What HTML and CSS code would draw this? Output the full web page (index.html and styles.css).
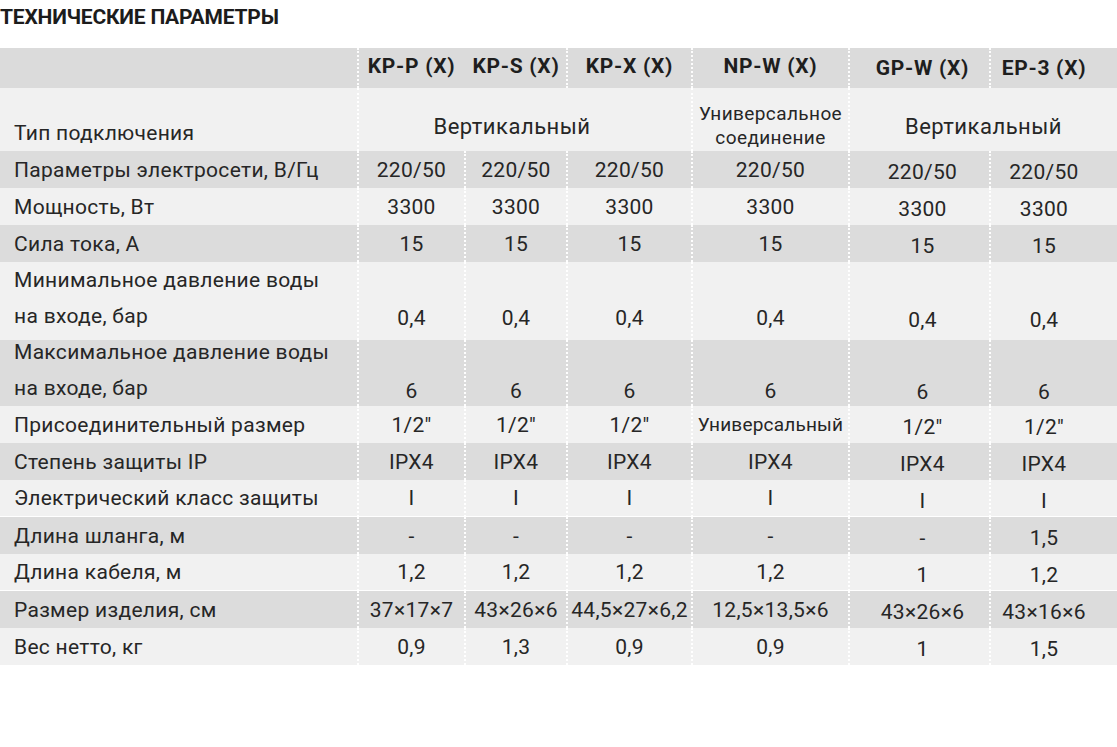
FILE: index.html
```html
<!DOCTYPE html>
<html lang="ru">
<head>
<meta charset="utf-8">
<title>Технические параметры</title>
<link rel="stylesheet" href="styles.css">
</head>
<body>
<h1 class="title">ТЕХНИЧЕСКИЕ ПАРАМЕТРЫ</h1>
<table class="spec">
  <colgroup>
    <col class="c0"><col class="c1"><col class="c2"><col class="c3"><col class="c4"><col class="c5"><col class="c6">
  </colgroup>
  <thead>
    <tr class="head">
      <th class="lbl"></th>
      <th class="v">KP-P (X)</th>
      <th class="v nodiv">KP-S (X)</th>
      <th class="v">KP-X (X)</th>
      <th class="v">NP-W (X)</th>
      <th class="v s gp">GP-W (X)</th>
      <th class="v s ep">EP-3 (X)</th>
    </tr>
  </thead>
  <tbody>
    <tr class="r-type light">
      <td class="lbl">Тип подключения</td>
      <td class="v big span3" colspan="3">Вертикальный</td>
      <td class="v small">Универсальное<br>соединение</td>
      <td class="v big" colspan="2">Вертикальный</td>
    </tr>
    <tr class="r dark">
      <td class="lbl">Параметры электросети, В/Гц</td>
      <td class="v">220/50</td><td class="v">220/50</td><td class="v">220/50</td><td class="v">220/50</td><td class="v s gp">220/50</td><td class="v s ep">220/50</td>
    </tr>
    <tr class="r light">
      <td class="lbl">Мощность, Вт</td>
      <td class="v">3300</td><td class="v">3300</td><td class="v">3300</td><td class="v">3300</td><td class="v s gp">3300</td><td class="v s ep">3300</td>
    </tr>
    <tr class="r dark">
      <td class="lbl">Сила тока, А</td>
      <td class="v">15</td><td class="v">15</td><td class="v">15</td><td class="v">15</td><td class="v s gp">15</td><td class="v s ep">15</td>
    </tr>
    <tr class="r-min light">
      <td class="lbl"><div class="two">Минимальное давление воды<br>на входе, бар</div></td>
      <td class="v">0,4</td><td class="v">0,4</td><td class="v">0,4</td><td class="v">0,4</td><td class="v s gp">0,4</td><td class="v s ep">0,4</td>
    </tr>
    <tr class="r-max dark">
      <td class="lbl"><div class="two up">Максимальное давление воды<br>на входе, бар</div></td>
      <td class="v">6</td><td class="v">6</td><td class="v">6</td><td class="v">6</td><td class="v s gp">6</td><td class="v s ep">6</td>
    </tr>
    <tr class="r light">
      <td class="lbl">Присоединительный размер</td>
      <td class="v">1/2"</td><td class="v">1/2"</td><td class="v">1/2"</td><td class="v small1">Универсальный</td><td class="v s gp">1/2"</td><td class="v s ep">1/2"</td>
    </tr>
    <tr class="r dark">
      <td class="lbl">Степень защиты IP</td>
      <td class="v">IPX4</td><td class="v">IPX4</td><td class="v">IPX4</td><td class="v">IPX4</td><td class="v s gp">IPX4</td><td class="v s ep">IPX4</td>
    </tr>
    <tr class="r light line">
      <td class="lbl">Электрический класс защиты</td>
      <td class="v">I</td><td class="v">I</td><td class="v">I</td><td class="v">I</td><td class="v s gp">I</td><td class="v s ep">I</td>
    </tr>
    <tr class="r dark">
      <td class="lbl">Длина шланга, м</td>
      <td class="v">-</td><td class="v">-</td><td class="v">-</td><td class="v">-</td><td class="v s gp">-</td><td class="v s ep">1,5</td>
    </tr>
    <tr class="r light line">
      <td class="lbl">Длина кабеля, м</td>
      <td class="v">1,2</td><td class="v">1,2</td><td class="v">1,2</td><td class="v">1,2</td><td class="v s gp">1</td><td class="v s ep">1,2</td>
    </tr>
    <tr class="r dark">
      <td class="lbl">Размер изделия, см</td>
      <td class="v">37×17×7</td><td class="v">43×26×6</td><td class="v">44,5×27×6,2</td><td class="v">12,5×13,5×6</td><td class="v s gp">43×26×6</td><td class="v s ep">43×16×6</td>
    </tr>
    <tr class="r light">
      <td class="lbl">Вес нетто, кг</td>
      <td class="v">0,9</td><td class="v">1,3</td><td class="v">0,9</td><td class="v">0,9</td><td class="v s gp">1</td><td class="v s ep">1,5</td>
    </tr>
  </tbody>
</table>
</body>
</html>
```
FILE: styles.css
```css
html, body {
  margin: 0;
  padding: 0;
  background: #ffffff;
}

body {
  font-family: Roboto, "Liberation Sans", sans-serif;
  color: #222222;
  width: 1117px;
  overflow: hidden;
}

.title {
  margin: 5px 0 19px 0;
  font-size: 21px;
  line-height: 24px;
  font-weight: 700;
  letter-spacing: -0.2px;
  color: #1c1c1c;
}

.spec {
  border-collapse: separate;
  border-spacing: 0;
  table-layout: fixed;
  width: 1117px;
  font-size: 21px;
  letter-spacing: 0.3px;
}

.c0 { width: 357px; }
.c1 { width: 107px; }
.c2 { width: 102px; }
.c3 { width: 125px; }
.c4 { width: 157px; }
.c5 { width: 141px; }
.c6 { width: 128px; }

.spec th,
.spec td {
  padding: 0;
  white-space: nowrap;
  vertical-align: middle;
  font-weight: 400;
  color: #262626;
}

.spec .lbl {
  text-align: left;
  padding-left: 14px;
}

.spec .v {
  text-align: center;
  border-left: 2px dotted rgba(255, 255, 255, 0.95);
}

.spec .nodiv {
  border-left-color: transparent;
}

.spec .gp { padding-left: 6px; }
.spec .ep { padding-right: 20px; }

.dark { background: #dcdcdc; }
.light { background: #f1f1f1; }

/* header */
.head th {
  background: #dbdbdb;
  height: 40px;
  font-weight: 700;
  font-size: 21px;
  letter-spacing: 0.7px;
  color: #1e1e1e;
  padding-bottom: 5px;
  box-sizing: border-box;
}
.head th.s { padding-bottom: 0; }

/* connection type row */
.r-type td {
  height: 63px;
  vertical-align: bottom;
  box-sizing: border-box;
}
.r-type .lbl { padding-bottom: 4px; line-height: 28px; }
.r-type .big {
  font-size: 22px;
  line-height: 28px;
  padding-bottom: 10px;
  letter-spacing: 0.5px;
}
.r-type .span3 { padding-right: 26px; }
.r-type .small {
  font-size: 19px;
  line-height: 24px;
  padding-bottom: 1px;
  letter-spacing: 0.4px;
}

/* standard rows */
.r td {
  height: 37px;
  line-height: 24px;
  box-sizing: border-box;
}
.r td.s { padding-top: 5px; }

.line td { border-bottom: 1px solid #ffffff; }

.small1 {
  font-size: 19px;
  letter-spacing: 0.2px;
}

/* two-line rows */
.two {
  line-height: 36px;
}
.two.up {
  margin-top: -6px;
}

.r-min td {
  height: 78px;
  vertical-align: bottom;
  line-height: 36px;
  padding-bottom: 4px;
  box-sizing: border-box;
}
.r-min td.lbl {
  vertical-align: top;
  padding-bottom: 0;
}
.r-min td.s { padding-bottom: 2px; }

.r-max td {
  height: 65px;
  vertical-align: bottom;
  line-height: 36px;
  box-sizing: border-box;
}
.r-max td.lbl { vertical-align: top; }
.r-max td.v { line-height: 30px; }
.r-max td.s { line-height: 28px; }
```
